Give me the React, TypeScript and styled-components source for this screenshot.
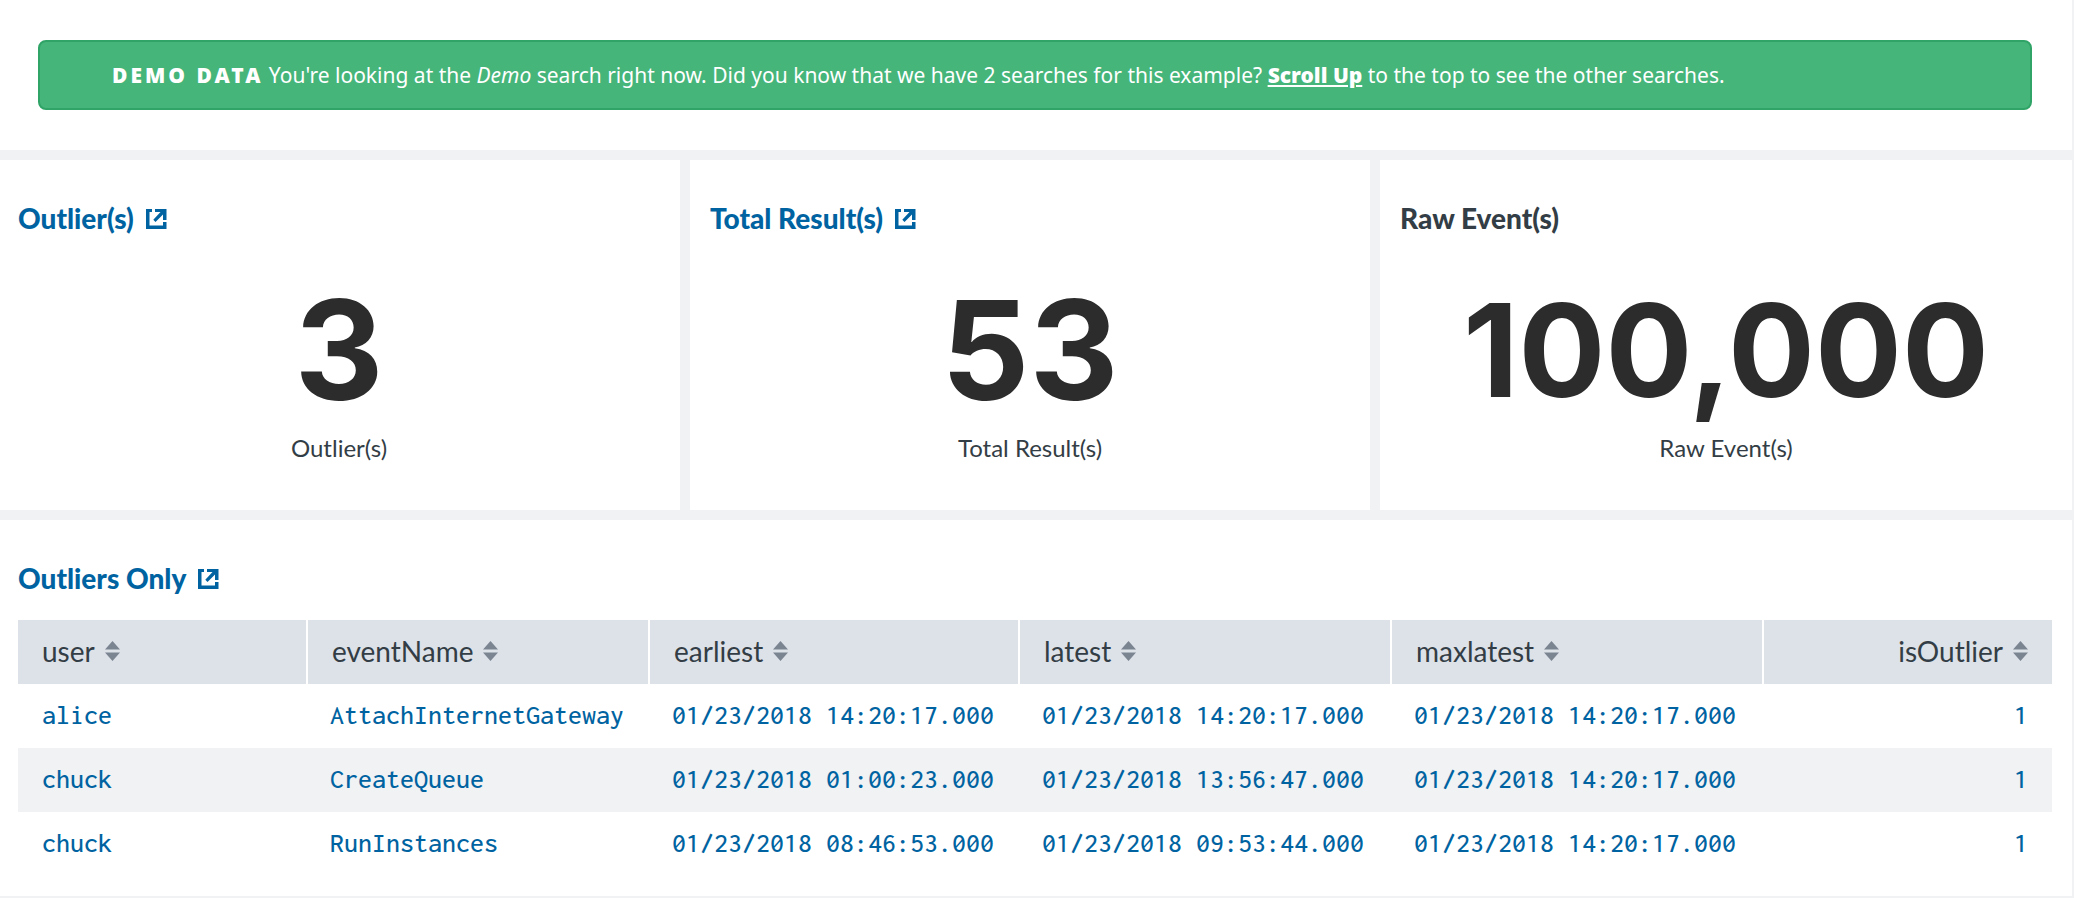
import React from 'react';
import styled, { createGlobalStyle } from 'styled-components';

const color = {
  gutter: '#f0f2f4',
  link: '#0063a1',
  text: '#333d45',
  figure: '#2c2c2c',
  header: '#dde1e8',
  stripe: '#f0f2f4',
  sort: '#7b8591',
  success: '#45b57a',
  successBorder: '#30a467',
};

const sans = `Lato, "Open Sans", sans-serif`;
const mono = `Inconsolata, "Noto Sans Mono CJK SC", "DejaVu Sans Mono", monospace`;

const GlobalStyle = createGlobalStyle`
  *, *::before, *::after { box-sizing: border-box; }
  body {
    margin: 0;
    background: ${color.gutter};
    color: ${color.text};
    font-family: ${sans};
  }
`;

const Dashboard = styled.main`
  display: flex;
  flex-direction: column;
  gap: 10px;
  padding: 0 2px 2px 0;
`;

const BannerPanel = styled.section`
  padding: 40px;
  padding-left: 38px;
  background: #fff;
`;

const Banner = styled.p`
  margin: 0;
  padding: 18px 72px;
  border: 2px solid ${color.successBorder};
  border-radius: 8px;
  background: ${color.success};
  color: #fff;
  font-family: "Noto Sans", "Open Sans", sans-serif;
  font-size: 21px;
  line-height: 30px;
`;

const BannerTag = styled.strong`
  font-weight: 900;
  letter-spacing: 3px;
`;

const BannerLink = styled.a`
  color: inherit;
  font-weight: 900;
`;

const Row = styled.div`
  display: grid;
  grid-template-columns: 680fr 680fr 692fr;
  gap: 10px;
`;

const Panel = styled.section<{ $edge?: boolean }>`
  padding: 40px 20px 20px ${(p) => (p.$edge ? 18 : 20)}px;
  background: #fff;
`;

const PanelTitle = styled.h2`
  margin: 0;
  font-size: 28px;
  font-weight: 900;
  line-height: 36px;
`;

const PanelLink = styled.a`
  display: inline-flex;
  align-items: center;
  gap: 12px;
  color: ${color.link};
  text-decoration: none;
  vertical-align: top;
`;

const Stat = styled.div`
  display: flex;
  flex-direction: column;
  align-items: center;
  padding: 34px 0 26px;
`;

const Figure = styled.strong<{ $long?: boolean }>`
  margin-bottom: 2px;
  color: ${color.figure};
  font-family: Inter, ${sans};
  font-size: ${(p) => (p.$long ? 129 : 138)}px;
  font-weight: 700;
  line-height: 160px;
`;

const Caption = styled.span`
  font-size: 24px;
  line-height: 32px;
`;

const Table = styled.table`
  width: 100%;
  margin-top: 24px;
  table-layout: fixed;
  border-collapse: separate;
  border-spacing: 0;
`;

const Col = styled.col<{ $w: number }>`
  width: ${(p) => p.$w}px;
`;

const HeadCell = styled.th<{ $right?: boolean }>`
  height: 64px;
  padding: 0 24px 2px;
  background: ${color.header};
  font-weight: 400;
  text-align: ${(p) => (p.$right ? 'right' : 'left')};
  & + & {
    border-left: 2px solid #fff;
  }
`;

const SortButton = styled.button`
  display: inline-flex;
  align-items: center;
  gap: 10px;
  padding: 0;
  border: 0;
  background: none;
  color: inherit;
  font: 400 28px/36px ${sans};
  vertical-align: middle;
  cursor: pointer;
`;

const BodyRow = styled.tr`
  &:nth-child(even) {
    background: ${color.stripe};
  }
`;

const Cell = styled.td<{ $right?: boolean }>`
  height: 64px;
  padding: 0 24px 2px;
  color: ${color.link};
  font: 500 28px/36px ${mono};
  text-align: ${(p) => (p.$right ? 'right' : 'left')};
  white-space: nowrap;
`;

const OpenIcon = () => (
  <svg width="21" height="21" viewBox="0 0 21 21" fill={color.link} aria-hidden="true">
    <path d="M0 1h6v3H3.500v13.500H17V14h3.500v7H0z" />
    <path d="M9 1h11.500v11H17V6.500L9.500 14 7.300 11.800 14.500 4H9z" />
  </svg>
);

const SortIcon = () => (
  <svg width="15" height="20" viewBox="0 0 15 20" fill={color.sort} aria-hidden="true">
    <path d="M7.500 0L15 8.500H0zM7.500 20L15 11.500H0z" />
  </svg>
);

const stats = [
  { title: 'Outlier(s)', value: '3', link: true },
  { title: 'Total Result(s)', value: '53', link: true },
  { title: 'Raw Event(s)', value: '100,000', link: false },
];

const columns = [
  { name: 'user', width: 288 },
  { name: 'eventName', width: 342 },
  { name: 'earliest', width: 370 },
  { name: 'latest', width: 372 },
  { name: 'maxlatest', width: 372 },
  { name: 'isOutlier', width: 290, right: true },
];

const rows = [
  ['alice', 'AttachInternetGateway', '01/23/2018 14:20:17.000', '01/23/2018 14:20:17.000', '01/23/2018 14:20:17.000', '1'],
  ['chuck', 'CreateQueue', '01/23/2018 01:00:23.000', '01/23/2018 13:56:47.000', '01/23/2018 14:20:17.000', '1'],
  ['chuck', 'RunInstances', '01/23/2018 08:46:53.000', '01/23/2018 09:53:44.000', '01/23/2018 14:20:17.000', '1'],
];

export default function App() {
  return (
    <>
      <GlobalStyle />
      <Dashboard>
        <BannerPanel>
          <Banner role="status">
            <BannerTag>DEMO DATA</BannerTag> You're looking at the <em>Demo</em> search right now. Did you know
            that we have 2 searches for this example? <BannerLink href="#top">Scroll Up</BannerLink> to the top to
            see the other searches.
          </Banner>
        </BannerPanel>

        <Row>
          {stats.map((s, i) => (
            <Panel key={s.title} $edge={i === 0}>
              <PanelTitle>
                {s.link ? (
                  <PanelLink href="#search">
                    {s.title}
                    <OpenIcon />
                  </PanelLink>
                ) : (
                  s.title
                )}
              </PanelTitle>
              <Stat>
                <Figure $long={s.value.length > 4}>{s.value}</Figure>
                <Caption>{s.title}</Caption>
              </Stat>
            </Panel>
          ))}
        </Row>

        <Panel $edge>
          <PanelTitle>
            <PanelLink href="#search">
              Outliers Only
              <OpenIcon />
            </PanelLink>
          </PanelTitle>
          <Table>
            <colgroup>
              {columns.map((c) => (
                <Col key={c.name} $w={c.width} />
              ))}
            </colgroup>
            <thead>
              <tr>
                {columns.map((c) => (
                  <HeadCell key={c.name} scope="col" $right={c.right}>
                    <SortButton type="button">
                      {c.name}
                      <SortIcon />
                    </SortButton>
                  </HeadCell>
                ))}
              </tr>
            </thead>
            <tbody>
              {rows.map((r, y) => (
                <BodyRow key={y}>
                  {r.map((value, x) => (
                    <Cell key={x} $right={columns[x].right}>
                      {value}
                    </Cell>
                  ))}
                </BodyRow>
              ))}
            </tbody>
          </Table>
        </Panel>
      </Dashboard>
    </>
  );
}
